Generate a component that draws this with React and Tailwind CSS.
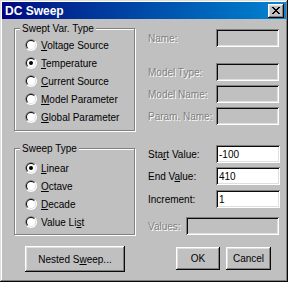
import React from "react";

function Radio({ checked }) {
  return (
    <svg width="12" height="12" viewBox="0 0 12 12" className="shrink-0">
      <circle cx="6" cy="6" r="6" fill="#ffffff" />
      <path d="M1.757 10.243A6 6 0 0 1 10.243 1.757Z" fill="#808080" />
      <circle cx="6" cy="6" r="5" fill="#dfdfdf" />
      <path d="M2.464 9.536A5 5 0 0 1 9.536 2.464Z" fill="#0a0a0a" />
      <circle cx="6" cy="6" r="4" fill="#ffffff" />
      {checked && <circle cx="6" cy="6" r="2" fill="#000000" />}
    </svg>
  );
}

function RadioRow({ checked, children }) {
  return (
    <div className="h-[18px] flex items-center pl-[10px] gap-[4px]">
      <Radio checked={checked} />
      <span className="leading-[13px] whitespace-nowrap">{children}</span>
    </div>
  );
}

function Group({ title, children, labelGap, bottomPad }) {
  return (
    <div className="border border-[#808080] shadow-[1px_1px_0_#ffffff,inset_1px_1px_0_#ffffff]">
      <div className="-mt-[7px] h-[13px] flex pl-[5px]">
        <span className="bg-[#c0c0c0] px-[2px] leading-[13px] whitespace-nowrap">{title}</span>
      </div>
      <div className={labelGap}>{children}</div>
      <div className={bottomPad} />
    </div>
  );
}

function Field({ value, disabled, w }) {
  return (
    <div
      className={`h-[18px] ${w} shrink-0 flex items-center pl-[3px] leading-[13px] shadow-[inset_1px_1px_0_#808080,inset_-1px_-1px_0_#ffffff,inset_2px_2px_0_#0a0a0a,inset_-2px_-2px_0_#dfdfdf] ${
        disabled ? "bg-[#c0c0c0]" : "bg-white"
      }`}
    >
      {value}
    </div>
  );
}

function Label({ children, disabled, w }) {
  return (
    <span
      className={`${w} shrink-0 leading-[13px] whitespace-nowrap ${
        disabled ? "text-[#808080] [text-shadow:1px_1px_0_#ffffff]" : "text-black"
      }`}
    >
      {children}
    </span>
  );
}

function Button({ children, w, h }) {
  return (
    <div
      className={`${w} ${h} shrink-0 flex items-center justify-center bg-[#c0c0c0] leading-[13px] shadow-[inset_-1px_-1px_0_#0a0a0a,inset_1px_1px_0_#ffffff,inset_-2px_-2px_0_#808080,inset_2px_2px_0_#dfdfdf]`}
    >
      {children}
    </div>
  );
}

export default function App() {
  return (
    <div className="w-[288px] h-[282px] bg-[#c0c0c0] p-[2px] text-[10px] text-black font-['Liberation_Sans',Arial,sans-serif] shadow-[inset_-1px_-1px_0_#0a0a0a,inset_1px_1px_0_#dfdfdf,inset_-2px_-2px_0_#808080,inset_2px_2px_0_#ffffff] overflow-hidden">
      {/* Title bar */}
      <div className="h-[17px] flex items-center justify-between pl-[3px] pr-[2px] bg-linear-to-r from-[#000080] to-[#1084d0]">
        <span className="text-white font-bold text-[12px] leading-[14px] whitespace-nowrap">DC Sweep</span>
        <div className="w-[16px] h-[14px] flex items-center justify-center bg-[#c0c0c0] shadow-[inset_-1px_-1px_0_#0a0a0a,inset_1px_1px_0_#ffffff,inset_-2px_-2px_0_#808080,inset_2px_2px_0_#dfdfdf]">
          <svg width="8" height="7" viewBox="0 0 8 7" className="-mt-[1px]">
            <path
              d="M0 0h2v1h-2zM6 0h2v1h-2zM1 1h2v1h-2zM5 1h2v1h-2zM2 2h4v1h-4zM3 3h2v1h-2zM2 4h4v1h-4zM1 5h2v1h-2zM5 5h2v1h-2zM0 6h2v1h-2zM6 6h2v1h-2z"
              fill="#000"
            />
          </svg>
        </div>
      </div>

      {/* Body */}
      <div className="flex pl-[12px]">
        {/* Left column */}
        <div className="w-[122px] shrink-0 flex flex-col">
          <div className="mt-[9px] w-[121px]">
            <Group title="Swept Var. Type" labelGap="mt-[1px]" bottomPad="h-[4px]">
              <RadioRow><u>V</u>oltage Source</RadioRow>
              <RadioRow checked><u>T</u>emperature</RadioRow>
              <RadioRow><u>C</u>urrent Source</RadioRow>
              <RadioRow><u>M</u>odel Parameter</RadioRow>
              <RadioRow><u>G</u>lobal Parameter</RadioRow>
            </Group>
          </div>
          <div className="mt-[17px] w-[121px]">
            <Group title="Sweep Type" labelGap="mt-[4px]" bottomPad="h-[3px]">
              <RadioRow checked><u>L</u>inear</RadioRow>
              <RadioRow><u>O</u>ctave</RadioRow>
              <RadioRow><u>D</u>ecade</RadioRow>
              <RadioRow>Value Li<u>s</u>t</RadioRow>
            </Group>
          </div>
          <div className="mt-[11px] ml-[11px]">
            <Button w="w-[100px]" h="h-[26px]">Nested S<u>w</u>eep...</Button>
          </div>
        </div>

        {/* Right column */}
        <div className="ml-[12px] w-[131px] shrink-0 flex flex-col">
          <div className="mt-[10px] h-[18px] flex items-center">
            <Label disabled w="w-[68px]">Name:</Label>
            <Field disabled w="w-[63px]" />
          </div>
          <div className="mt-[16px] h-[18px] flex items-center">
            <Label disabled w="w-[68px]">Model Type:</Label>
            <Field disabled w="w-[63px]" />
          </div>
          <div className="mt-[4px] h-[18px] flex items-center">
            <Label disabled w="w-[68px]">Model Name:</Label>
            <Field disabled w="w-[63px]" />
          </div>
          <div className="mt-[4px] h-[18px] flex items-center">
            <Label disabled w="w-[68px]">Param. Name:</Label>
            <Field disabled w="w-[63px]" />
          </div>
          <div className="mt-[20px] h-[18px] flex items-center">
            <Label w="w-[68px]">Sta<u>r</u>t Value:</Label>
            <Field w="w-[64px]" value="-100" />
          </div>
          <div className="mt-[4px] h-[18px] flex items-center">
            <Label w="w-[68px]">End V<u>a</u>lue:</Label>
            <Field w="w-[64px]" value="410" />
          </div>
          <div className="mt-[5px] h-[18px] flex items-center">
            <Label w="w-[68px]">Increment:</Label>
            <Field w="w-[64px]" value="1" />
          </div>
          <div className="mt-[9px] h-[18px] flex items-center">
            <Label disabled w="w-[38px]">Values:</Label>
            <Field disabled w="w-[93px]" />
          </div>
          <div className="mt-[12px] flex pl-[28px] gap-[6px]">
            <Button w="w-[44px]" h="h-[23px]">OK</Button>
            <Button w="w-[45px]" h="h-[23px]">Cancel</Button>
          </div>
        </div>
      </div>
    </div>
  );
}
